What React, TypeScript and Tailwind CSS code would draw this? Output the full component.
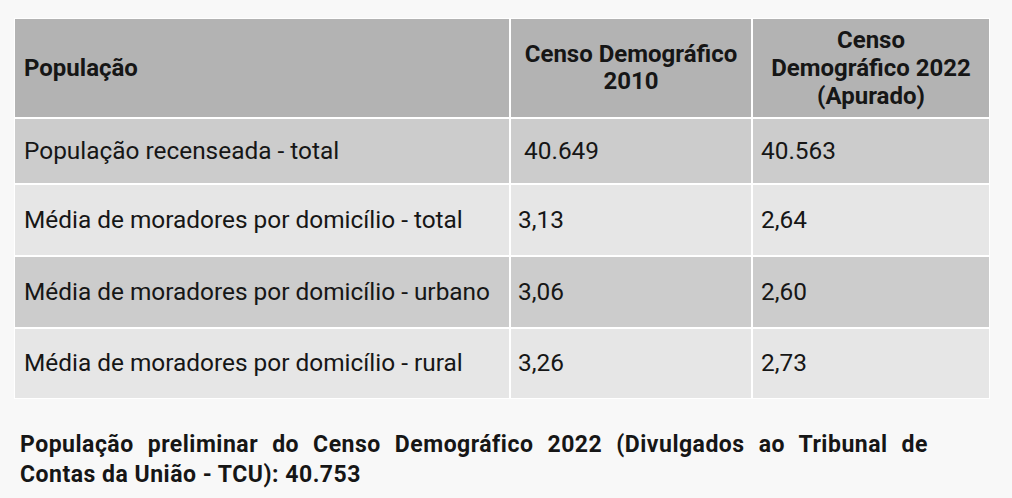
const rows = [
    { label: "População recenseada - total", a: "\u00a040.649", b: "40.563", bg: "bg-[#cccccc]", h: "h-[64px]" },
    { label: "Média de moradores por domicílio - total", a: "3,13", b: "2,64", bg: "bg-[#e6e6e6]", h: "h-[70px]" },
    { label: "Média de moradores por domicílio - urbano", a: "3,06", b: "2,60", bg: "bg-[#cccccc]", h: "h-[70px]" },
    { label: "Média de moradores por domicílio - rural", a: "3,26", b: "2,73", bg: "bg-[#e6e6e6]", h: "h-[69px]" },
];

export default function App() {
    return (
        <div className="min-h-[498px] w-[1012px] bg-[#f8f8f8] pt-[18px] pl-[14px] font-['Roboto',sans-serif] text-[#161616]">
            <div className="grid w-[976px] grid-cols-[494px_240px_236px] gap-[2px] border border-white bg-white">
                <div className="flex h-[98px] items-center bg-[#b3b3b3] pl-[9px] text-[24px] font-bold">População</div>
                <div className="flex h-[98px] items-center justify-center bg-[#b3b3b3] text-center text-[24px] leading-[27px] font-bold">
                    Censo Demográfico
                    <br />
                    2010
                </div>
                <div className="flex h-[98px] items-center justify-center bg-[#b3b3b3] text-center text-[24px] leading-[28px] font-bold">
                    Censo
                    <br />
                    Demográfico 2022
                    <br />
                    (Apurado)
                </div>

                {rows.map((r) => (
                    <div key={r.label} className="contents">
                        <div className={`flex items-center ${r.h} ${r.bg} pl-[9px] text-[24.4px]`}>{r.label}</div>
                        <div className={`flex items-center ${r.h} ${r.bg} pl-[7px] text-[24.4px] whitespace-pre`}>{r.a}</div>
                        <div className={`flex items-center ${r.h} ${r.bg} pl-[8px] text-[24.4px]`}>{r.b}</div>
                    </div>
                ))}
            </div>

            <p className="mt-[31px] ml-[6px] w-[908px] text-justify text-[23px] leading-[30px] font-bold tracking-[0.5px]">
                População preliminar do Censo Demográfico 2022 (Divulgados ao Tribunal de Contas da União - TCU): 40.753
            </p>
        </div>
    );
}
